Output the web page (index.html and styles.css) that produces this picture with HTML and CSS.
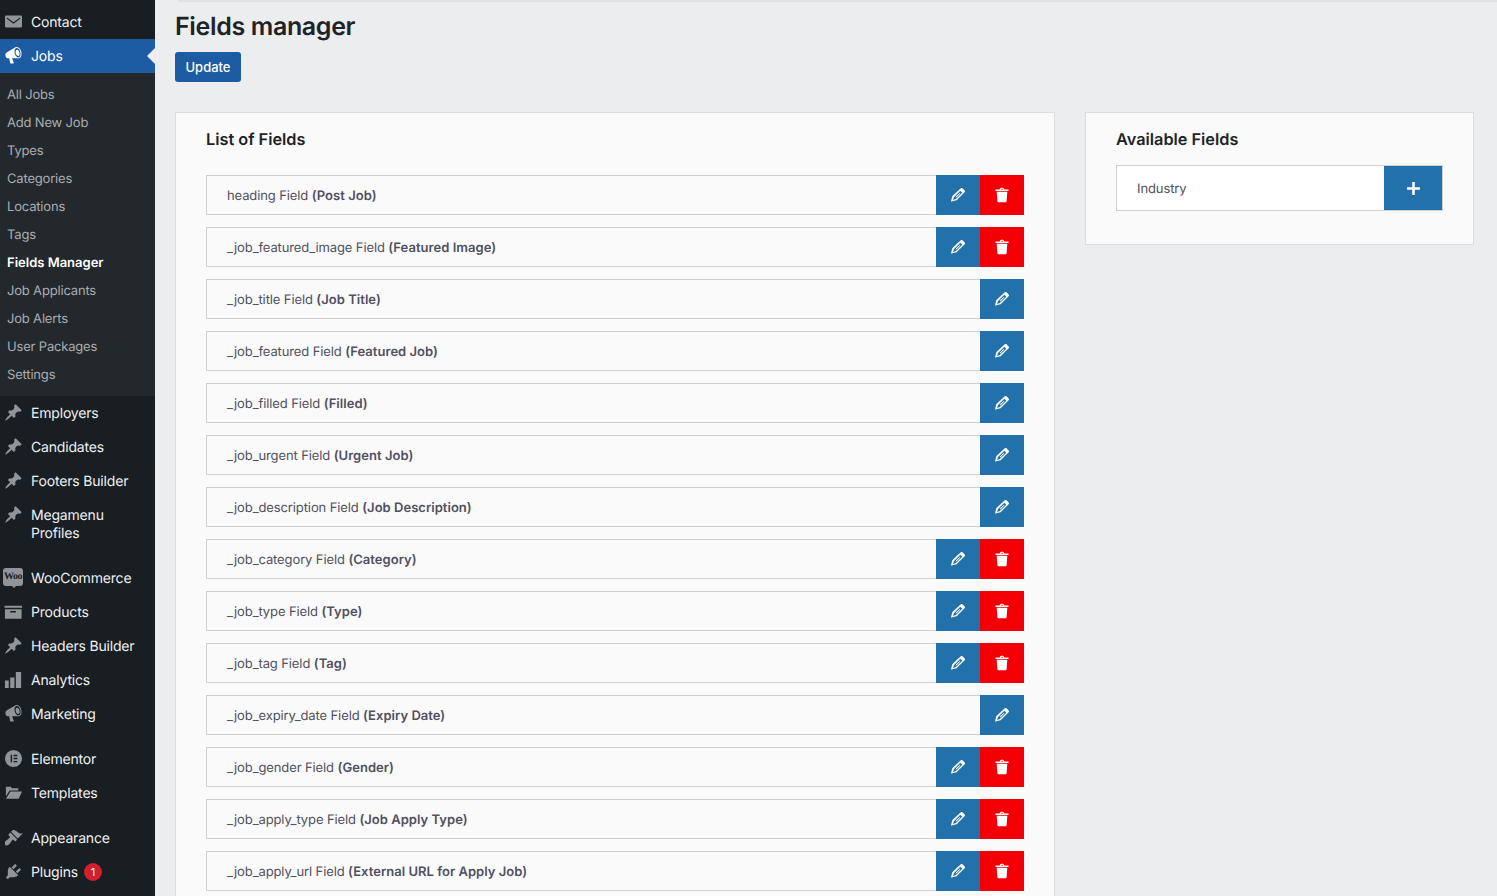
FILE: index.html
```html
<!DOCTYPE html>
<html lang="en">
<head>
<meta charset="utf-8">
<title>Fields manager</title>
<link rel="stylesheet" href="styles.css">
</head>
<body>
<svg class="defs" width="0" height="0" aria-hidden="true">
  <defs>
    <symbol id="i-pin" viewBox="0 0 20 20"><path d="M10.44 3.02l1.82-1.82 6.36 6.35-1.83 1.82c-1.05-.68-2.48-.57-3.41.36l-.75.75c-.92.93-1.04 2.35-.35 3.41l-1.83 1.82-2.41-2.41-2.8 2.79c-.42.42-3.38 2.71-3.8 2.29s1.86-3.39 2.28-3.81l2.79-2.79L4.1 9.36l1.83-1.82c1.05.69 2.48.57 3.4-.36l.75-.75c.93-.92 1.05-2.35.36-3.41z"/></symbol>
    <symbol id="i-mega" viewBox="0 0 20 20"><path d="M18.15 5.94c.46 1.62.38 3.22-.02 4.48-.42 1.28-1.26 2.18-2.3 2.48-.16.06-.26.06-.4.06-.06.02-.12.02-.18.02-.06.02-.14.02-.22.02H8.5l1.8 4.9c.02.14-.06.26-.14.34-.08.1-.24.16-.34.16H6.95c-.1 0-.26-.06-.34-.16-.08-.08-.16-.2-.14-.34l-1-4.9H4.25l-.02-.02c-.5.06-1.08-.18-1.54-.62s-.88-1.08-1.06-1.88c-.24-.8-.2-1.56-.02-2.2.18-.62.58-1.08 1.06-1.3l.02-.02 9-5.4c.1-.06.18-.1.24-.16.06-.04.14-.08.24-.12.16-.08.28-.12.5-.18 1.04-.3 2.24.1 3.22.98s1.84 2.24 2.26 3.86zm-2.58 5.98h-.02c.4-.1.74-.34 1.04-.7.58-.7.86-1.76.86-3.04 0-.64-.1-1.3-.26-1.98-.34-1.36-1.02-2.5-1.78-3.24s-1.68-1.1-2.46-.88c-.82.22-1.4.96-1.7 2-.32 1.04-.28 2.36.06 3.72.38 1.36 1 2.5 1.8 3.24.78.74 1.62 1.1 2.46.88zm-.38-1.38c-.58.16-1.2-.2-1.68-.7-.5-.5-.94-1.26-1.18-2.12-.2-.86-.2-1.68-.02-2.36.2-.66.56-1.2 1.14-1.34.58-.16 1.2.2 1.68.7.48.48.94 1.24 1.18 2.12.22.86.22 1.68.02 2.36-.18.66-.58 1.2-1.14 1.34z"/></symbol>
    <symbol id="i-mail" viewBox="0 0 20 20"><path d="M20 16V4.500C20 3.670 19.330 3 18.500 3H1.500C.67 3 0 3.670 0 4.500V16c0 .83.67 1 1.500 1h17c.83 0 1.500-.17 1.500-1zM17.800 5.800c.33.33.15.67-.03.84L10 12.600 2.230 6.640c-.18-.17-.36-.51-.03-.84s.67-.17.95.07L10 11l6.850-5.130c.28-.24.620-.4.950-.07z"/></symbol>
    <symbol id="i-box" viewBox="0 0 20 20"><path d="M.5 4H19v2H.5zM1 7.500h17.500v10H1zM6.500 9.500V11h6V9.500z" fill-rule="evenodd"/></symbol>
    <symbol id="i-bars" viewBox="0 0 20 20"><path d="M1 11h4v8H1zM6.500 8H11v11H6.500zM12.500 2H18v17h-5.500z"/></symbol>
    <symbol id="i-elem" viewBox="0 0 20 20"><path fill-rule="evenodd" d="M10 1a9 9 0 1 0 0 18 9 9 0 0 0 0-18zM7 6h1.500v8H7zM10 6h4v1.500h-4zM10 9.250h4v1.500h-4zM10 12.500h4V14h-4z"/></symbol>
    <symbol id="i-folder" viewBox="0 0 20 20"><path d="M2 4h5l1.500 1.500H15V8H6L2 14zM6.800 9H19l-3.500 7.500H2z"/></symbol>
    <symbol id="i-brush" viewBox="0 0 20 20"><path d="M14.480 11.060L7.410 3.990l1.500-1.500c.5-.56 2.300-.47 3.510.32 1.210.8 1.430 1.280 2.910 2.100 1.180.64 2.450 1.260 4.450.85zm-.71.71L6.700 4.700 4.930 6.470c-.39.39-.39 1.020 0 1.410l1.060 1.060c.39.39.39 1.030 0 1.420-.6.6-1.430 1.110-2.210 1.690-.35.26-.7.53-1.010.84C1.430 13.230.78 14.810 1 16.500c.1.800.300 1.400.700 1.800.8.400 2.200.100 3.400-.900.800-.6 1.400-1.600 2-2.500.6-.8 1.100-1.600 1.700-2.200.39-.39 1.030-.39 1.420 0l1.040 1.040c.39.39 1.020.39 1.410 0z"/></symbol>
    <symbol id="i-plug" viewBox="0 0 20 20"><path d="M13.110 4.360L9.870 7.600 8 5.730l3.240-3.240c.35-.34 1.050-.2 1.560.32.52.51.66 1.210.31 1.550zm-8 1.770l.91-1.120 9.010 9.010-1.190.84c-.71.71-2.630 1.160-3.820 1.160H6.140L4.900 17.260c-.59.59-1.540.59-2.120 0-.59-.58-.59-1.530 0-2.120l1.240-1.240v-3.880c0-1.130.4-3.190 1.090-3.890zm7.260 3.970l3.240-3.240c.34-.35 1.040-.21 1.550.31.52.51.66 1.210.31 1.550l-3.240 3.250z"/></symbol>
    <symbol id="i-edit" viewBox="0.5 0.5 15 15"><path d="M11 .9a1.300 1.300 0 0 1 1.850 0l2.250 2.250a1.300 1.300 0 0 1 0 1.850l-8.600 8.600-5.500 1.450a.4.400 0 0 1-.48-.48l1.450-5.500zM10.500 3.400L3.600 10.300l-.9 3 3-.9L12.600 5.500zM9.800 5.800l.7.7-4.200 4.200-.7-.7z" fill-rule="evenodd"/></symbol>
    <symbol id="i-trash" viewBox="0 0.5 14 15.400"><path d="M.5 2.700h4.200C4.900 1.600 5.800 1 7 1s2.100.6 2.300 1.700h4.200v1.500H.5zM5.700 2.700h2.600C8.100 2.200 7.600 2 7 2s-1.100.2-1.300.7zM1.700 5h10.600l-.7 9.400c-.1.6-.5 1-1.100 1H3.500c-.6 0-1-.4-1.100-1z" fill-rule="evenodd"/></symbol>
    <symbol id="i-plus" viewBox="0 0 14 14"><path d="M5.800 1h2.400v4.800H13v2.400H8.200V13H5.800V8.200H1V5.800h4.800z"/></symbol>
  </defs>
</svg>
<div class="shell">
  <nav class="sidebar">
    <ul class="menu menu-first">
      <li class="item"><svg class="ico ico-mail"><use href="#i-mail"/></svg><span>Contact</span></li>
      <li class="item current"><svg class="ico"><use href="#i-mega"/></svg><span>Jobs</span></li>
    </ul>
    <ul class="submenu">
      <li>All Jobs</li>
      <li>Add New Job</li>
      <li>Types</li>
      <li>Categories</li>
      <li>Locations</li>
      <li>Tags</li>
      <li class="on">Fields Manager</li>
      <li>Job Applicants</li>
      <li>Job Alerts</li>
      <li>User Packages</li>
      <li>Settings</li>
    </ul>
    <ul class="menu">
      <li class="item"><svg class="ico"><use href="#i-pin"/></svg><span>Employers</span></li>
      <li class="item"><svg class="ico"><use href="#i-pin"/></svg><span>Candidates</span></li>
      <li class="item"><svg class="ico"><use href="#i-pin"/></svg><span>Footers Builder</span></li>
      <li class="item"><svg class="ico"><use href="#i-pin"/></svg><span>Megamenu<br>Profiles</span></li>
    </ul>
    <ul class="menu sep">
      <li class="item"><span class="woo"><span class="woo-t">Woo</span></span><span>WooCommerce</span></li>
      <li class="item"><svg class="ico"><use href="#i-box"/></svg><span>Products</span></li>
      <li class="item"><svg class="ico"><use href="#i-pin"/></svg><span>Headers Builder</span></li>
      <li class="item"><svg class="ico"><use href="#i-bars"/></svg><span>Analytics</span></li>
      <li class="item"><svg class="ico"><use href="#i-mega"/></svg><span>Marketing</span></li>
    </ul>
    <ul class="menu sep">
      <li class="item"><svg class="ico"><use href="#i-elem"/></svg><span>Elementor</span></li>
      <li class="item"><svg class="ico"><use href="#i-folder"/></svg><span>Templates</span></li>
    </ul>
    <ul class="menu sep">
      <li class="item"><svg class="ico"><use href="#i-brush"/></svg><span>Appearance</span></li>
      <li class="item"><svg class="ico"><use href="#i-plug"/></svg><span>Plugins</span><span class="badge">1</span></li>
    </ul>
  </nav>
  <main class="content">
    <div class="topline"></div>
    <h1 class="title">Fields manager</h1>
    <button class="update" type="button">Update</button>
    <div class="columns">
      <section class="card card-list">
        <h2 class="card-title">List of Fields</h2>
        <ul class="fields">
          <li class="field"><span class="label">heading Field <b>(Post Job)</b></span><span class="act edit"><svg class="pen"><use href="#i-edit"/></svg></span><span class="act del"><svg class="bin"><use href="#i-trash"/></svg></span></li>
          <li class="field"><span class="label">_job_featured_image Field <b>(Featured Image)</b></span><span class="act edit"><svg class="pen"><use href="#i-edit"/></svg></span><span class="act del"><svg class="bin"><use href="#i-trash"/></svg></span></li>
          <li class="field"><span class="label">_job_title Field <b>(Job Title)</b></span><span class="act edit"><svg class="pen"><use href="#i-edit"/></svg></span></li>
          <li class="field"><span class="label">_job_featured Field <b>(Featured Job)</b></span><span class="act edit"><svg class="pen"><use href="#i-edit"/></svg></span></li>
          <li class="field"><span class="label">_job_filled Field <b>(Filled)</b></span><span class="act edit"><svg class="pen"><use href="#i-edit"/></svg></span></li>
          <li class="field"><span class="label">_job_urgent Field <b>(Urgent Job)</b></span><span class="act edit"><svg class="pen"><use href="#i-edit"/></svg></span></li>
          <li class="field"><span class="label">_job_description Field <b>(Job Description)</b></span><span class="act edit"><svg class="pen"><use href="#i-edit"/></svg></span></li>
          <li class="field"><span class="label">_job_category Field <b>(Category)</b></span><span class="act edit"><svg class="pen"><use href="#i-edit"/></svg></span><span class="act del"><svg class="bin"><use href="#i-trash"/></svg></span></li>
          <li class="field"><span class="label">_job_type Field <b>(Type)</b></span><span class="act edit"><svg class="pen"><use href="#i-edit"/></svg></span><span class="act del"><svg class="bin"><use href="#i-trash"/></svg></span></li>
          <li class="field"><span class="label">_job_tag Field <b>(Tag)</b></span><span class="act edit"><svg class="pen"><use href="#i-edit"/></svg></span><span class="act del"><svg class="bin"><use href="#i-trash"/></svg></span></li>
          <li class="field"><span class="label">_job_expiry_date Field <b>(Expiry Date)</b></span><span class="act edit"><svg class="pen"><use href="#i-edit"/></svg></span></li>
          <li class="field"><span class="label">_job_gender Field <b>(Gender)</b></span><span class="act edit"><svg class="pen"><use href="#i-edit"/></svg></span><span class="act del"><svg class="bin"><use href="#i-trash"/></svg></span></li>
          <li class="field"><span class="label">_job_apply_type Field <b>(Job Apply Type)</b></span><span class="act edit"><svg class="pen"><use href="#i-edit"/></svg></span><span class="act del"><svg class="bin"><use href="#i-trash"/></svg></span></li>
          <li class="field"><span class="label">_job_apply_url Field <b>(External URL for Apply Job)</b></span><span class="act edit"><svg class="pen"><use href="#i-edit"/></svg></span><span class="act del"><svg class="bin"><use href="#i-trash"/></svg></span></li>
        </ul>
      </section>
      <section class="card card-side">
        <h2 class="card-title">Available Fields</h2>
        <div class="avail"><span class="avail-label">Industry</span><span class="add"><svg class="plus"><use href="#i-plus"/></svg></span></div>
      </section>
    </div>
  </main>
</div>
</body>
</html>
```

FILE: styles.css
```css
* { box-sizing: border-box; }
html, body { margin: 0; padding: 0; height: 896px; overflow: hidden; }
body { background: #ecedef; font-family: Inter, "Liberation Sans", sans-serif; color: #1d2327; text-rendering: geometricPrecision; }
ul { list-style: none; margin: 0; padding: 0; }
.defs { position: absolute; }
.shell { display: flex; height: 896px; overflow: hidden; }

.sidebar { flex: 0 0 155px; width: 155px; background: #191e23; padding-top: 5px; }
.menu.sep { margin-top: 11px; }
.item { position: relative; display: flex; align-items: flex-start; padding: 9px 0 7px 31px; font-size: 14px; line-height: 18px; letter-spacing: -.18px; color: #eef0f2; }
.item .ico { position: absolute; left: 4px; top: 7px; width: 19px; height: 19px; fill: #8f959b; }
.item .ico-mail { left: 5px; top: 8px; width: 17px; height: 17px; }
.item.current { background: #1d5ca3; color: #fff; }
.item.current .ico { fill: #fff; }
.item.current::after { content: ""; position: absolute; right: 0; top: 9px; border: 8px solid transparent; border-right-color: #ecedef; border-left-width: 0; }
.submenu { background: #23282d; padding: 7px 0 8px; }
.submenu li { padding-left: 7px; height: 28px; font-size: 13px; line-height: 30px; letter-spacing: -.18px; color: #a9adb1; }
.submenu li.on { color: #fff; font-weight: 600; letter-spacing: 0; }
.woo { position: absolute; left: 3px; top: 7px; width: 20px; height: 18px; border-radius: 3px; background: #8f959b; display: flex; align-items: center; justify-content: center; }
.woo::after { content: ""; position: absolute; left: 9px; bottom: -2px; border-style: solid; border-width: 2px 2px 0; border-color: #8f959b transparent transparent; }
.woo-t { font-size: 10px; line-height: 10px; font-weight: 700; color: #191e23; letter-spacing: -.5px; font-family: "Liberation Serif", serif; }
.badge { width: 18px; height: 18px; margin: -1px 0 0 6px; border-radius: 50%; background: #d0202e; color: #fff; font-size: 11px; line-height: 19px; letter-spacing: 0; text-align: center; }

.content { position: relative; flex: 1; min-width: 0; padding-left: 20px; }
.topline { position: absolute; left: 23px; right: 0; top: 0; height: 2px; background: #e1e2e4; }
.title { margin: 0; padding-top: 11px; font-size: 25px; line-height: 32px; font-weight: 600; color: #1d2327; letter-spacing: -.35px; }
.update { display: block; margin: 9px 0 0; width: 66px; height: 30px; padding: 0; border: 0; border-radius: 3px; background: #1d5ca3; color: #fff; font: 500 13px/30px Inter, "Liberation Sans", sans-serif; }
.columns { display: flex; align-items: flex-start; gap: 30px; margin-top: 30px; }
.card { background: #fafafa; border: 1px solid #dcdcde; padding: 0 30px; }
.card-list { width: 880px; flex: none; padding-bottom: 30px; }
.card-side { width: 389px; flex: none; height: 133px; }
.card-title { margin: 0; padding-top: 16px; font-size: 16.3px; line-height: 21px; font-weight: 600; color: #1d2327; }
.fields { margin-top: 25px; display: flex; flex-direction: column; gap: 12px; }
.field { display: flex; height: 40px; border: 1px solid #d0d0d2; border-right: 0; background: #fafafa; margin-top: 0; }
.label { flex: 1; padding-left: 20px; font-size: 13px; line-height: 40px; letter-spacing: -.11px; color: #50505f; }
.label b { font-weight: 600; letter-spacing: .03px; }
.act { flex: 0 0 44px; height: 40px; margin-top: -1px; display: flex; align-items: center; justify-content: center; }
.edit { background: #2371ab; }
.del { background: #f30007; }
.pen { width: 14px; height: 14px; fill: #fff; }
.bin { width: 14px; height: 16px; fill: #fff; }
.avail { display: flex; margin-top: 15px; height: 46px; width: 327px; background: #fff; border: 1px solid #d0d0d2; }
.avail-label { flex: 1; padding-left: 20px; font-size: 13px; line-height: 46px; letter-spacing: -.11px; color: #50505f; }
.add { flex: 0 0 58px; background: #2371ab; display: flex; align-items: center; justify-content: center; }
.plus { width: 15px; height: 15px; fill: #fff; }
```
